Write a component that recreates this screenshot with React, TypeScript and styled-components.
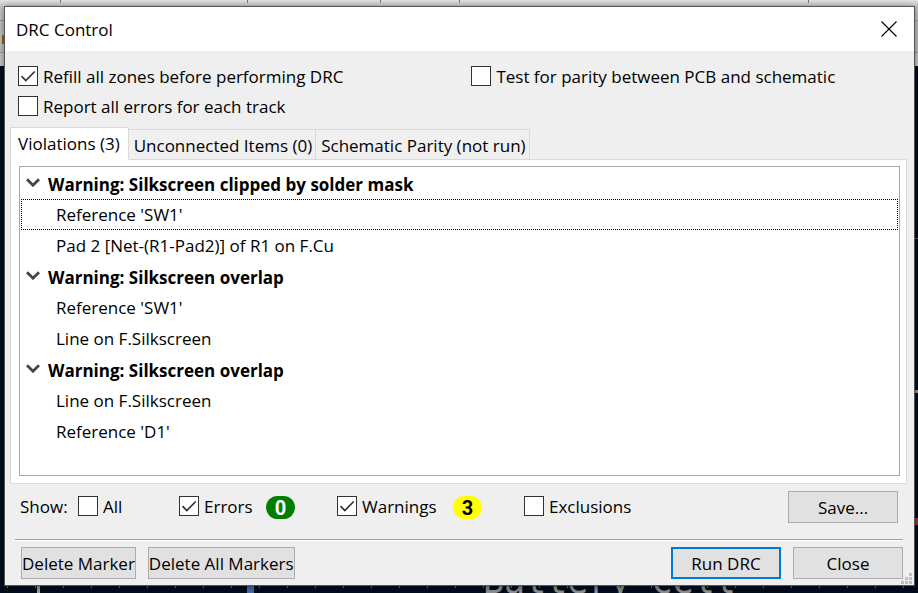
import React, { ReactNode } from "react";
import styled, { createGlobalStyle, css } from "styled-components";

const Global = createGlobalStyle`
  * { box-sizing: border-box; }
  body { margin: 0; font-family: "Open Sans", "Segoe UI", "Noto Sans", sans-serif; font-size: 17px; line-height: 24px; color: #000; }
  button, input { font: inherit; color: inherit; margin: 0; }
`;

const Desktop = styled.div`
  position: relative;
  display: flex;
  flex-direction: column;
  min-height: 100vh;
  padding: 6px 3px 7px 4px;
  overflow: hidden;
  background: #000d1e;
`;

const Backdrop = styled.div`
  position: absolute;
  inset: 0;
`;

const Toolbar = styled.div`
  height: 66px;
  background: linear-gradient(#e4e4e4 0, #c4c4c4 7px, #cfcfcf 20px, #a0a0a0 20px, #a0a0a0 21px, #c6c6c6 21px, #c6c6c6 52px, #a0a0a0 52px, #a0a0a0 53px, #cccccc 53px);
`;

const Art = styled.svg`
  position: absolute;
  left: 0;
  top: 0;
  font-family: "DejaVu Sans Mono", monospace;
`;

const Dialog = styled.main`
  position: relative;
  flex: 1;
  display: flex;
  flex-direction: column;
  border: 1px solid #555;
  background: #efefef;
  box-shadow: 0 2px 8px rgba(0, 0, 0, 0.5);
`;

const TitleBar = styled.header`
  display: flex;
  align-items: center;
  justify-content: space-between;
  height: 44px;
  padding: 0 12px 0 11px;
  background: #fff;
`;

const Title = styled.h1`
  margin: 0;
  padding-top: 2px;
  font-size: 17px;
  font-weight: 400;
`;

const CloseIcon = styled.button`
  display: grid;
  place-items: center;
  width: 26px;
  height: 26px;
  padding: 0;
  border: 0;
  background: none;
`;

const Options = styled.div`
  display: grid;
  grid-template-columns: 51fr 49fr;
  row-gap: 6px;
  padding: 14px 7px 0 13px;
`;

const CheckLabel = styled.label`
  display: flex;
  align-items: center;
  gap: 5px;
  white-space: nowrap;
`;

const CheckBox = styled.span`
  display: grid;
  width: 20px;
  height: 20px;
  margin-bottom: 2px;
  > * { grid-area: 1 / 1; }
`;

const CheckInput = styled.input`
  appearance: none;
  width: 20px;
  height: 20px;
  border: 1px solid #333;
  background: #fff;
  & + svg { visibility: hidden; pointer-events: none; }
  &:checked + svg { visibility: visible; }
`;

const TabList = styled.div`
  display: flex;
  align-items: flex-end;
  margin: 8px 7px 0 5px;
`;

const Tab = styled.button<{ $active?: boolean }>`
  height: 31px;
  margin-bottom: -1px;
  padding: 3px 3px 0 5px;
  border: 1px solid #d9d9d9;
  border-left-width: 0;
  background: #f0f0f0;
  white-space: nowrap;
  ${(p) =>
    p.$active &&
    css`
      position: relative;
      height: 33px;
      padding: 0 8px 0 7px;
      border-left-width: 1px;
      border-bottom-color: #fff;
      background: #fff;
    `}
`;

const Panel = styled.section`
  flex: 1;
  display: flex;
  margin: 0 7px 0 5px;
  padding: 6px 6px 7px 8px;
  border: 1px solid #d9d9d9;
  background: #fff;
`;

const Tree = styled.ul`
  flex: 1;
  margin: 0;
  padding: 1px;
  border: 1px solid #a9a9ab;
  list-style: none;
`;

const Group = styled.ul`
  margin: 0;
  padding: 0;
  list-style: none;
`;

const GroupHeader = styled.div`
  display: flex;
  align-items: center;
  gap: 8px;
  height: 31px;
  padding: 2px 0 0 5px;
  font-weight: 700;
  svg { margin-bottom: 4px; }
`;

const Item = styled.li<{ $focused?: boolean }>`
  height: 31px;
  padding: 3px 0 0 34px;
  border: 1px dotted ${(p) => (p.$focused ? "#000" : "transparent")};
`;

const Filters = styled.div`
  display: flex;
  align-items: center;
  padding: 7px 16px 16px 15px;
`;

const Filter = styled.div<{ $width?: number }>`
  display: flex;
  align-items: center;
  justify-content: space-between;
  width: ${(p) => (p.$width ? `${p.$width}px` : "auto")};
`;

const ShowLabel = styled.span`
  width: 58px;
`;

const Spacer = styled.span<{ $width?: number }>`
  ${(p) => (p.$width ? `width: ${p.$width}px;` : "flex: 1;")}
`;

const Badge = styled.output<{ $bg: string; $fg: string }>`
  width: 29px;
  height: 23px;
  border-radius: 12px;
  background: ${(p) => p.$bg};
  color: ${(p) => p.$fg};
  font: 700 20px/24px Roboto, Arial, sans-serif;
  text-align: center;
`;

const Rule = styled.hr`
  align-self: stretch;
  height: 2px;
  margin: 0 11px 0 10px;
  border: 0;
  border-top: 1px solid #a0a0a0;
  background: #fff;
`;

const Actions = styled.footer`
  display: flex;
  gap: 12px;
  padding: 6px 11px 6px 16px;
`;

const Button = styled.button<{ $primary?: boolean; $compact?: boolean }>`
  height: 32px;
  min-width: ${(p) => (p.$compact ? "0" : "110px")};
  padding: ${(p) => (p.$compact ? "2px 0 0" : "2px 2px 0")};
  border: ${(p) => (p.$primary ? "2px solid #0078d7" : "1px solid #adadad")};
  background: #e1e1e1;
  line-height: 26px;
  white-space: nowrap;
`;

const Grip = styled.svg`
  position: absolute;
  right: 2px;
  bottom: 1px;
`;

function Check({ children, checked }: { children: ReactNode; checked?: boolean }) {
  return (
    <CheckLabel>
      <CheckBox>
        <CheckInput type="checkbox" defaultChecked={checked} />
        <svg width="20" height="20" viewBox="0 0 20 20" fill="none" stroke="#333" strokeWidth="1.7">
          <path d="M3.5 10.2l4.3 4.3 8.9-9" />
        </svg>
      </CheckBox>
      {children}
    </CheckLabel>
  );
}

const groups = [
  { title: "Warning: Silkscreen clipped by solder mask", items: ["Reference 'SW1'", "Pad 2 [Net-(R1-Pad2)] of R1 on F.Cu"] },
  { title: "Warning: Silkscreen overlap", items: ["Reference 'SW1'", "Line on F.Silkscreen"] },
  { title: "Warning: Silkscreen overlap", items: ["Line on F.Silkscreen", "Reference 'D1'"] },
];

export default function App() {
  return (
    <Desktop>
      <Global />
      <Backdrop aria-hidden="true">
        <Toolbar />
        <Art width="918" height="593" viewBox="0 0 918 593">
          <path d="M60.5 0v3M247.5 0v3M380.5 0v3M459.5 0v3M808.5 0v3" stroke="#777" />
          <path d="M7 587h910" stroke="#70777e" strokeWidth="2" strokeDasharray="1 27" />
          <path d="M38.5 585v8" stroke="#aaa" strokeWidth="3" />
          <path d="M250.5 585v8" stroke="#4a74b8" strokeWidth="7" />
          <path d="M914 521.5h4" stroke="#b02c30" strokeWidth="7" />
          <path d="M914 391.5h4" stroke="#999" strokeWidth="3" />
          <path d="M914 238.5h4" stroke="#59616b" />
          <path d="M3 35v9" stroke="#b65e10" strokeWidth="2" />
          <text x="483" y="593" fontSize="35" fill="#999">Battery Cell</text>
        </Art>
      </Backdrop>
      <Dialog>
        <TitleBar>
          <Title>DRC Control</Title>
          <CloseIcon aria-label="Close dialog">
            <svg width="16" height="16" viewBox="0 0 16 16" stroke="#000" strokeWidth="1.1">
              <path d="M.5 .5l15 15M15.5 .5l-15 15" />
            </svg>
          </CloseIcon>
        </TitleBar>
        <Options>
          <Check checked>Refill all zones before performing DRC</Check>
          <Check>Test for parity between PCB and schematic</Check>
          <Check>Report all errors for each track</Check>
        </Options>
        <TabList role="tablist">
          <Tab role="tab" aria-selected="true" $active>Violations (3)</Tab>
          <Tab role="tab" aria-selected="false">Unconnected Items (0)</Tab>
          <Tab role="tab" aria-selected="false">Schematic Parity (not run)</Tab>
        </TabList>
        <Panel role="tabpanel">
          <Tree>
            {groups.map((group, g) => (
              <li key={g}>
                <GroupHeader>
                  <svg width="14" height="9" viewBox="0 0 14 9" fill="none" stroke="#444" strokeWidth="2.8">
                    <path d="M1 1.2l6 6 6-6" />
                  </svg>
                  {group.title}
                </GroupHeader>
                <Group>
                  {group.items.map((item, i) => (
                    <Item key={item} $focused={g === 0 && i === 0}>{item}</Item>
                  ))}
                </Group>
              </li>
            ))}
          </Tree>
        </Panel>
        <Filters>
          <ShowLabel>Show:</ShowLabel>
          <Filter $width={101}><Check>All</Check></Filter>
          <Filter $width={116}>
            <Check checked>Errors</Check>
            <Badge $bg="#008000" $fg="#fff">0</Badge>
          </Filter>
          <Spacer $width={42} />
          <Filter $width={145}>
            <Check checked>Warnings</Check>
            <Badge $bg="#ffff00" $fg="#000">3</Badge>
          </Filter>
          <Spacer $width={42} />
          <Filter><Check>Exclusions</Check></Filter>
          <Spacer />
          <Button>Save...</Button>
        </Filters>
        <Rule />
        <Actions>
          <Button $compact>Delete Marker</Button>
          <Button $compact>Delete All Markers</Button>
          <Spacer />
          <Button $primary>Run DRC</Button>
          <Button>Close</Button>
        </Actions>
        <Grip width="11" height="11" viewBox="0 0 11 11" fill="#bfbfbf" aria-hidden="true">
          <path d="M8 0h3v3h-3zM4 4h3v3h-3zM8 4h3v3h-3zM0 8h3v3h-3zM4 8h3v3h-3zM8 8h3v3h-3z" />
        </Grip>
      </Dialog>
    </Desktop>
  );
}
